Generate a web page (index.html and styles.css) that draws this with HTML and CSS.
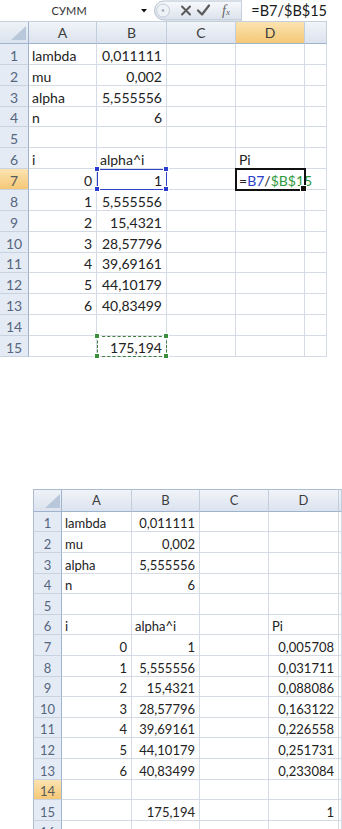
FILE: index.html
```html
<!DOCTYPE html>
<html>
<head>
<meta charset="utf-8">
<link rel="stylesheet" href="styles.css">
</head>
<body>
<div class="fbar">
  <div class="namebox">СУММ</div>
  <svg class="dd" width="12" height="21" viewBox="0 0 12 21"><polygon points="3,9 9,9 6,12.5" fill="#111"/></svg>
  <svg class="btns" width="92" height="21" viewBox="0 0 92 21">
    <defs><linearGradient id="pg" x1="0" y1="0" x2="0" y2="1"><stop offset="0" stop-color="#f7f9fc"/><stop offset="1" stop-color="#dbe2ec"/></linearGradient></defs>
    <path d="M91 1 H14 A9.5 9.5 0 0 0 14 20 H91" fill="url(#pg)" stroke="#b3bfcf"/>
    <circle cx="13" cy="10.5" r="6.5" fill="#eef2f7" stroke="#c2ccd9"/>
    <circle cx="13" cy="10.5" r="1.3" fill="#9aa7b8"/>
    <path d="M32 6.5 L40 14.5 M40 6.5 L32 14.5" stroke="#5a5a5a" stroke-width="2" stroke-linecap="round"/>
    <path d="M48 10.5 L52 14.5 L59 5.5" stroke="#5a5a5a" stroke-width="2.2" fill="none" stroke-linecap="round" stroke-linejoin="round"/>
    <text x="72" y="15" class="fx">f<tspan font-size="9">x</tspan></text>
    <line x1="91.5" y1="0" x2="91.5" y2="21" stroke="#c7d0dc"/>
  </svg>
  <div class="formula">=B7/$B$15</div>
</div>

<table class="sheet top">
  <colgroup><col class="c0"><col class="ca"><col class="cb"><col class="cc"><col class="cd"><col class="ce"></colgroup>
  <tr class="hdr"><th class="cor"><svg width="29" height="21" viewBox="0 0 29 21"><polygon points="26,4 26,18 11,18" fill="#b9c7da"/></svg></th><th class="ch">A</th><th class="ch">B</th><th class="ch">C</th><th class="ch act">D</th><th class="ch"></th></tr>
  <tr><th class="rh">1</th><td>lambda</td><td class="n">0,011111</td><td></td><td></td><td></td></tr>
  <tr><th class="rh">2</th><td>mu</td><td class="n">0,002</td><td></td><td></td><td></td></tr>
  <tr><th class="rh">3</th><td>alpha</td><td class="n">5,555556</td><td></td><td></td><td></td></tr>
  <tr><th class="rh">4</th><td>n</td><td class="n">6</td><td></td><td></td><td></td></tr>
  <tr><th class="rh">5</th><td></td><td></td><td></td><td></td><td></td></tr>
  <tr><th class="rh">6</th><td>i</td><td>alpha^i</td><td></td><td>Pi</td><td></td></tr>
  <tr><th class="rh act">7</th><td class="n">0</td><td class="n sel">1<span class="hd h1"></span><span class="hd h2"></span><span class="hd h3"></span><span class="hd h4"></span></td><td></td><td class="edit"><span class="op">=</span><span class="rb">B7</span><span class="op">/</span><span class="rg">$B$15</span><span class="fill"></span></td><td></td></tr>
  <tr><th class="rh">8</th><td class="n">1</td><td class="n">5,555556</td><td></td><td></td><td></td></tr>
  <tr><th class="rh">9</th><td class="n">2</td><td class="n">15,4321</td><td></td><td></td><td></td></tr>
  <tr><th class="rh">10</th><td class="n">3</td><td class="n">28,57796</td><td></td><td></td><td></td></tr>
  <tr><th class="rh">11</th><td class="n">4</td><td class="n">39,69161</td><td></td><td></td><td></td></tr>
  <tr><th class="rh">12</th><td class="n">5</td><td class="n">44,10179</td><td></td><td></td><td></td></tr>
  <tr><th class="rh">13</th><td class="n">6</td><td class="n">40,83499</td><td></td><td></td><td></td></tr>
  <tr><th class="rh">14</th><td></td><td></td><td></td><td></td><td></td></tr>
  <tr><th class="rh">15</th><td></td><td class="n ants">175,194<span class="gd h1"></span><span class="gd h2"></span><span class="gd h3"></span><span class="gd h4"></span></td><td></td><td></td><td></td></tr>
</table>

<table class="sheet bot">
  <colgroup><col class="c0"><col class="ba"><col class="bb"><col class="bc"><col class="bd"><col class="be"></colgroup>
  <tr class="hdr"><th class="cor"><svg width="29" height="21" viewBox="0 0 29 21"><polygon points="26,4 26,18 11,18" fill="#b9c7da"/></svg></th><th class="ch">A</th><th class="ch">B</th><th class="ch">C</th><th class="ch">D</th><th class="ch"></th></tr>
  <tr><th class="rh">1</th><td>lambda</td><td class="n">0,011111</td><td></td><td></td><td></td></tr>
  <tr><th class="rh">2</th><td>mu</td><td class="n">0,002</td><td></td><td></td><td></td></tr>
  <tr><th class="rh">3</th><td>alpha</td><td class="n">5,555556</td><td></td><td></td><td></td></tr>
  <tr><th class="rh">4</th><td>n</td><td class="n">6</td><td></td><td></td><td></td></tr>
  <tr><th class="rh">5</th><td></td><td></td><td></td><td></td><td></td></tr>
  <tr><th class="rh">6</th><td>i</td><td>alpha^i</td><td></td><td>Pi</td><td></td></tr>
  <tr><th class="rh">7</th><td class="n">0</td><td class="n">1</td><td></td><td class="n">0,005708</td><td></td></tr>
  <tr><th class="rh">8</th><td class="n">1</td><td class="n">5,555556</td><td></td><td class="n">0,031711</td><td></td></tr>
  <tr><th class="rh">9</th><td class="n">2</td><td class="n">15,4321</td><td></td><td class="n">0,088086</td><td></td></tr>
  <tr><th class="rh">10</th><td class="n">3</td><td class="n">28,57796</td><td></td><td class="n">0,163122</td><td></td></tr>
  <tr><th class="rh">11</th><td class="n">4</td><td class="n">39,69161</td><td></td><td class="n">0,226558</td><td></td></tr>
  <tr><th class="rh">12</th><td class="n">5</td><td class="n">44,10179</td><td></td><td class="n">0,251731</td><td></td></tr>
  <tr><th class="rh">13</th><td class="n">6</td><td class="n">40,83499</td><td></td><td class="n">0,233084</td><td></td></tr>
  <tr><th class="rh act">14</th><td></td><td></td><td></td><td></td><td></td></tr>
  <tr><th class="rh">15</th><td></td><td class="n">175,194</td><td></td><td class="n">1</td><td></td></tr>
  <tr><th class="rh">16</th><td></td><td></td><td></td><td></td><td></td></tr>
</table>
</body>
</html>
```

FILE: styles.css
```css
html, body {
  margin: 0;
  padding: 0;
  overflow: hidden;
  background: #fff;
}
body {
  width: 342px;
  height: 829px;
  font-family: Lato, "Open Sans", sans-serif;
  color: #222;
}

/* formula bar */
.fbar {
  display: flex;
  align-items: center;
  width: 327px;
  height: 21px;
  border-bottom: 1px solid #c5d0dd;
}
.namebox {
  width: 140px;
  text-align: center;
  font-size: 11px;
  color: #333;
  letter-spacing: 0.2px;
}
.dd { flex: none; }
.btns { flex: none; }
.fx {
  font-family: "Liberation Serif", serif;
  font-style: italic;
  font-size: 14px;
  fill: #666;
}
.formula {
  padding-left: 9px;
  font-size: 14.5px;
  color: #1a1a1a;
}

/* sheets */
.sheet {
  border-collapse: separate;
  border-spacing: 0;
  table-layout: fixed;
}
.sheet td, .sheet th {
  padding: 0 4px 0 3px;
  border-right: 1px solid #d5dbe5;
  border-bottom: 1px solid #d5dbe5;
  vertical-align: bottom;
  white-space: nowrap;
  overflow: visible;
  line-height: 16px;
  font-weight: normal;
}
.sheet .n { text-align: right; }

.top { width: 327px; font-size: 14px; }
.top col.c0 { width: 29px; }
.top col.ca { width: 68px; }
.top col.cb { width: 70px; }
.top col.cc { width: 69px; }
.top col.cd { width: 69px; }
.top col.ce { width: 22px; }
.top tr { height: 20.87px; }
.top tr.hdr { height: 21px; }

.bot {
  width: 309px;
  margin-left: 33px;
  margin-top: 132px;
  font-size: 13px;
}
.bot col.c0 { width: 29px; }
.bot col.ba { width: 70px; }
.bot col.bb { width: 68px; }
.bot col.bc { width: 69px; }
.bot col.bd { width: 70px; }
.bot col.be { width: 3px; }
.bot tr { height: 20.6px; }
.bot tr.hdr { height: 22px; }
.bot tr.hdr th { border-top: 1px solid #a9bcd2; }
.bot th.cor, .bot th.rh { border-left: 1px solid #a9bcd2; }

/* headers */
.sheet th.ch {
  text-align: center;
  vertical-align: middle;
  padding: 0;
  color: #3d3d3d;
  background: linear-gradient(#f1f4f9, #dbe3ee);
  border-right: 1px solid #c3cedc;
  border-bottom: 1px solid #9fb4cc;
}
.sheet th.cor {
  padding: 0;
  vertical-align: top;
  background: linear-gradient(#eef2f8, #dbe3ee);
  border-right: 1px solid #9fb4cc;
  border-bottom: 1px solid #9fb4cc;
}
.sheet th.cor svg { display: block; }
.sheet th.rh {
  text-align: center;
  padding: 0;
  color: #56667e;
  background: #e4ebf5;
  border-right: 1px solid #9fb4cc;
  border-bottom: 1px solid #c9d3e0;
}
.sheet th.act {
  background: linear-gradient(#fbe3b1, #f5c876);
  color: #3d3d3d;
}
.sheet th.rh.act { color: #5a5a5a; }

/* selection & editing */
.sel {
  position: relative;
  outline: 1px solid #3344cc;
  outline-offset: -1px;
}
.hd, .gd {
  position: absolute;
  width: 4px;
  height: 4px;
  background: #2a3bd0;
  border: 1px solid #fff;
}
.gd { background: #3a8f3a; }
.h1 { left: -3px; top: -3px; }
.h2 { right: -3px; top: -3px; }
.h3 { left: -3px; bottom: -3px; }
.h4 { right: -3px; bottom: -3px; }

.edit {
  position: relative;
  outline: 2px solid #111;
  outline-offset: -1px;
}
.op { color: #222; }
.rb { color: #2b3ec8; }
.rg { color: #2f9a3c; }
.fill {
  position: absolute;
  right: -3px;
  bottom: -3px;
  width: 5px;
  height: 5px;
  background: #111;
  border: 1px solid #fff;
}

.ants {
  position: relative;
  outline: 1px dashed #3d7d3d;
  outline-offset: -1px;
}
```
